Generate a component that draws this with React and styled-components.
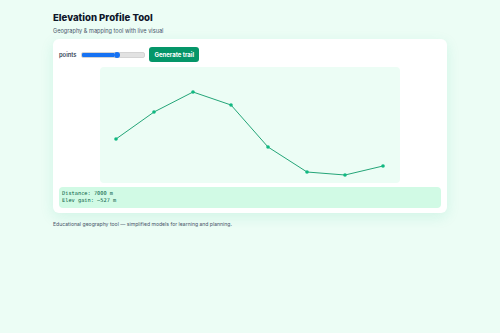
import styled, { createGlobalStyle } from 'styled-components';

const GlobalStyle = createGlobalStyle`
  body {
    margin: 0;
    background: #ecfdf5;
    font-family: Inter, "Noto Sans", sans-serif;
    color: #0f172a;
  }
`;

const Page = styled.div`
  width: 394px;
  padding: 11px 0 0 53px;
`;

const Title = styled.h1`
  margin: 0;
  font-size: 9.6px;
  line-height: 14px;
  font-weight: 800;
  color: #0f172a;
`;

const Subtitle = styled.p`
  margin: 2px 0 0 0;
  font-size: 5.6px;
  line-height: 8px;
  color: #475569;
`;

const Card = styled.div`
  margin-top: 4px;
  background: #fff;
  border-radius: 6px;
  padding: 8px 6px 5px;
  box-shadow: 0 4px 14px rgba(16, 185, 129, 0.12);
`;

const Controls = styled.div`
  display: flex;
  align-items: center;
  gap: 4px;
  height: 15px;
`;

const Label = styled.label`
  font-size: 5.8px;
  font-weight: 600;
  color: #334155;
  margin-right: 1px;
`;

const Range = styled.input`
  -webkit-appearance: none;
  appearance: none;
  width: 62px;
  height: 4px;
  margin: 0;
  border-radius: 2px;
  background: linear-gradient(to right, #1672f3 0%, #1672f3 ${p => p.$fill}%, #e2e2e2 ${p => p.$fill}%, #e2e2e2 100%);
  border: 0.5px solid #d4d4d4;

  &::-webkit-slider-thumb {
    -webkit-appearance: none;
    width: 6px;
    height: 6px;
    border-radius: 50%;
    background: #1672f3;
  }
`;

const Button = styled.button`
  height: 15px;
  padding: 0 5px;
  border: none;
  border-radius: 3px;
  background: #059669;
  color: #fff;
  font-family: Inter, "Noto Sans", sans-serif;
  font-size: 6px;
  font-weight: 700;
`;

const Chart = styled.svg`
  display: block;
  margin: 5px auto 0;
  width: 300px;
  height: 116px;
  background: #ecfdf5;
  border-radius: 4px;
`;

const Info = styled.div`
  margin-top: 4px;
  background: #d1fae5;
  border-radius: 4px;
  padding: 3px 3px 4px;
  font-family: "DejaVu Sans Mono", "Liberation Mono", monospace;
  font-size: 5.3px;
  line-height: 7px;
  color: #065f46;
  white-space: pre;
`;

const Footer = styled.p`
  margin: 7px 0 0 0;
  font-size: 5.1px;
  line-height: 8px;
  color: #475569;
`;

const points = [
  [16, 72],
  [54, 45],
  [93, 25],
  [131, 38],
  [168, 80],
  [207, 105],
  [245, 108],
  [283, 99],
];

export default function App() {
  return (
    <>
      <GlobalStyle />
      <Page>
        <Title>Elevation Profile Tool</Title>
        <Subtitle>Geography &amp; mapping tool with live visual</Subtitle>
        <Card>
          <Controls>
            <Label>points</Label>
            <Range type="range" min="3" max="12" defaultValue="8" $fill={52} />
            <Button>Generate trail</Button>
          </Controls>
          <Chart viewBox="0 0 300 116">
            <polyline
              points={points.map(p => p.join(',')).join(' ')}
              fill="none"
              stroke="#24a578"
              strokeWidth="1"
            />
            {points.map(([x, y], i) => (
              <circle key={i} cx={x} cy={y} r="1.8" fill="#10b981" />
            ))}
          </Chart>
          <Info>{'Distance: 7000 m\nElev gain: ~527 m'}</Info>
        </Card>
        <Footer>Educational geography tool — simplified models for learning and planning.</Footer>
      </Page>
    </>
  );
}
